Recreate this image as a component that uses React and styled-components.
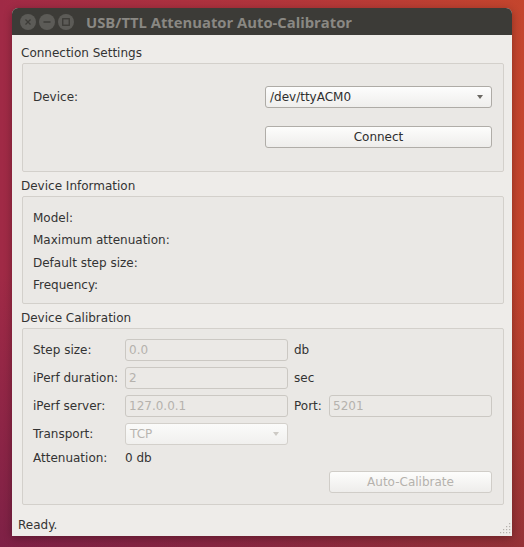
import React from 'react';
import styled, { createGlobalStyle } from 'styled-components';

const GlobalStyle = createGlobalStyle`
  html, body { margin: 0; padding: 0; }
  body {
    width: 524px;
    height: 547px;
    overflow: hidden;
    background:
      linear-gradient(180deg, rgba(0,0,0,0) 50%, rgba(70,18,70,0.38) 100%),
      linear-gradient(90deg, #a02a46 0%, #b1343c 50%, #c4452d 100%);
    font-family: "DejaVu Sans", sans-serif;
  }
`;

const Window = styled.div`
  margin: 8px 0 0 12px;
  width: 500px;
  height: 528px;
  display: flex;
  flex-direction: column;
  background: #eeece9;
  border-radius: 6px 6px 0 0;
  overflow: hidden;
  box-shadow: 0 2px 8px rgba(0, 0, 0, 0.3);
`;

const TitleBar = styled.div`
  flex: none;
  height: 27px;
  background: #3c3b37;
  display: flex;
  align-items: center;
  padding-left: 8px;
`;

const WinButtons = styled.div`
  display: flex;
  gap: 3px;
`;

const WinButton = styled.div`
  width: 16px;
  height: 16px;
  border-radius: 50%;
  background: #5c5b57;
  display: flex;
  align-items: center;
  justify-content: center;
`;

const Title = styled.div`
  margin-left: 12px;
  font-family: "Open Sans", sans-serif;
  font-weight: 700;
  font-size: 14.8px;
  color: #8a8883;
  white-space: nowrap;
`;

const Body = styled.div`
  flex: none;
  padding: 10px 8px 0 10px;
  display: flex;
  flex-direction: column;
`;

const SectionTitle = styled.div`
  height: 16px;
  line-height: 16px;
  font-size: 12px;
  color: #333;
  margin: ${p => (p.$first ? 0 : 6)}px 0 2px -1px;
  white-space: nowrap;
`;

const GroupBox = styled.div`
  border: 1px solid #d3d0cb;
  border-radius: 2px;
  background: #eae8e5;
  padding: ${p => p.$pad};
`;

const ConnectionGrid = styled.div`
  display: grid;
  grid-template-columns: 1fr 227px;
  grid-template-rows: 22px 22px;
  row-gap: 18px;
`;

const InfoList = styled.div`
  display: flex;
  flex-direction: column;
  gap: 6.3px;
`;

const Text = styled.div`
  font-size: 12px;
  line-height: 16px;
  color: #333;
  white-space: nowrap;
  display: flex;
  align-items: center;
  padding-left: ${p => p.$indent || 0}px;
  grid-column: ${p => p.$col || 'auto'};
`;

const CalibGrid = styled.div`
  display: grid;
  grid-template-columns: 92px 163px 1fr 163px;
  grid-template-rows: 22px 22px 22px 22px 14px 22px;
  row-gap: 6px;
`;

const Combo = styled.div`
  box-sizing: border-box;
  height: 22px;
  border: 1px solid ${p => (p.$disabled ? '#d3d0cb' : '#aeaba6')};
  border-radius: 3px;
  background: ${p =>
    p.$disabled
      ? 'linear-gradient(180deg, #fbfbfa 0%, #f1f0ee 100%)'
      : 'linear-gradient(180deg, #fdfdfd 0%, #efeeec 100%)'};
  color: ${p => (p.$disabled ? '#b8b5b0' : '#2e2e2e')};
  font-size: 12px;
  display: flex;
  align-items: center;
  justify-content: space-between;
  padding: 0 8px 0 4px;
  grid-column: ${p => p.$col || 'auto'};
`;

const Arrow = styled.span`
  width: 0;
  height: 0;
  border-left: 3.5px solid transparent;
  border-right: 3.5px solid transparent;
  border-top: 4px solid ${p => (p.$disabled ? '#cdcac5' : '#6b6863')};
`;

const Button = styled.button`
  box-sizing: border-box;
  height: 22px;
  margin: 0;
  padding: 0;
  border: 1px solid ${p => (p.disabled ? '#d0cdc8' : '#b0ada8')};
  border-radius: 3px;
  background: linear-gradient(180deg, #fdfdfc 0%, #eeedeb 100%);
  color: ${p => (p.disabled ? '#b5b2ad' : '#2e2e2e')};
  font-family: "DejaVu Sans", sans-serif;
  font-size: 12px;
  grid-column: ${p => p.$col || 'auto'};
  grid-row: ${p => p.$row || 'auto'};
`;

const Field = styled.input`
  box-sizing: border-box;
  width: 100%;
  height: 22px;
  margin: 0;
  padding: 0 0 0 3px;
  border: 1px solid #cbc8c3;
  border-radius: 3px;
  background: #ebe9e6;
  color: #b5b2ad;
  -webkit-text-fill-color: #b5b2ad;
  opacity: 1;
  font-family: "DejaVu Sans", sans-serif;
  font-size: 12px;
  grid-column: ${p => p.$col || 'auto'};
`;

const StatusBar = styled.div`
  flex: 1;
  display: flex;
  justify-content: space-between;
  padding: 12px 0 0 6px;
`;

const StatusText = styled.div`
  font-size: 12px;
  line-height: 16px;
  color: #333;
`;

const Grip = styled.svg`
  align-self: flex-end;
  margin: 0 1px 2px 0;
  display: block;
`;

const CloseIcon = () => (
  <svg width="8" height="8" viewBox="0 0 8 8">
    <path d="M1.5 1.5 L6.5 6.5 M6.5 1.5 L1.5 6.5" stroke="#3c3b37" strokeWidth="1.3" />
  </svg>
);
const MinIcon = () => (
  <svg width="8" height="8" viewBox="0 0 8 8">
    <path d="M0.5 4 H7.5" stroke="#3c3b37" strokeWidth="1.3" />
  </svg>
);
const MaxIcon = () => (
  <svg width="8" height="8" viewBox="0 0 8 8">
    <rect x="0.75" y="0.75" width="6.5" height="6.5" fill="none" stroke="#3c3b37" strokeWidth="1.3" />
  </svg>
);

const gripDots = [
  [9, 0], [6, 3], [9, 3], [3, 6], [6, 6], [9, 6], [0, 9], [3, 9], [6, 9], [9, 9],
];

export default function App() {
  return (
    <>
      <GlobalStyle />
      <Window>
        <TitleBar>
          <WinButtons>
            <WinButton><CloseIcon /></WinButton>
            <WinButton><MinIcon /></WinButton>
            <WinButton><MaxIcon /></WinButton>
          </WinButtons>
          <Title>USB/TTL Attenuator Auto-Calibrator</Title>
        </TitleBar>
        <Body>
          <SectionTitle $first>Connection Settings</SectionTitle>
          <GroupBox $pad="22px 11px 23px 10px">
            <ConnectionGrid>
              <Text>Device:</Text>
              <Combo>
                <span>/dev/ttyACM0</span>
                <Arrow />
              </Combo>
              <Button $col={2}>Connect</Button>
            </ConnectionGrid>
          </GroupBox>

          <SectionTitle>Device Information</SectionTitle>
          <GroupBox $pad="13px 11px 10px 10px">
            <InfoList>
              <Text>Model:</Text>
              <Text>Maximum attenuation:</Text>
              <Text>Default step size:</Text>
              <Text>Frequency:</Text>
            </InfoList>
          </GroupBox>

          <SectionTitle>Device Calibration</SectionTitle>
          <GroupBox $pad="10px 11px 11px 10px">
            <CalibGrid>
              <Text $col={1}>Step size:</Text>
              <Field disabled defaultValue="0.0" />
              <Text $indent={6}>db</Text>

              <Text $col={1}>iPerf duration:</Text>
              <Field disabled defaultValue="2" />
              <Text $indent={6}>sec</Text>

              <Text $col={1}>iPerf server:</Text>
              <Field disabled defaultValue="127.0.0.1" />
              <Text $indent={6}>Port:</Text>
              <Field disabled defaultValue="5201" />

              <Text $col={1}>Transport:</Text>
              <Combo $disabled>
                <span>TCP</span>
                <Arrow $disabled />
              </Combo>

              <Text $col={1}>Attenuation:</Text>
              <Text>0 db</Text>

              <Button disabled $col={4} $row={6}>Auto-Calibrate</Button>
            </CalibGrid>
          </GroupBox>
        </Body>
        <StatusBar>
          <StatusText>Ready.</StatusText>
          <Grip width="11" height="11" viewBox="0 0 11 11">
            {gripDots.map(([x, y]) => (
              <rect key={`${x}-${y}`} x={x} y={y} width="1.2" height="1.2" fill="#b4b1ac" />
            ))}
          </Grip>
        </StatusBar>
      </Window>
    </>
  );
}
